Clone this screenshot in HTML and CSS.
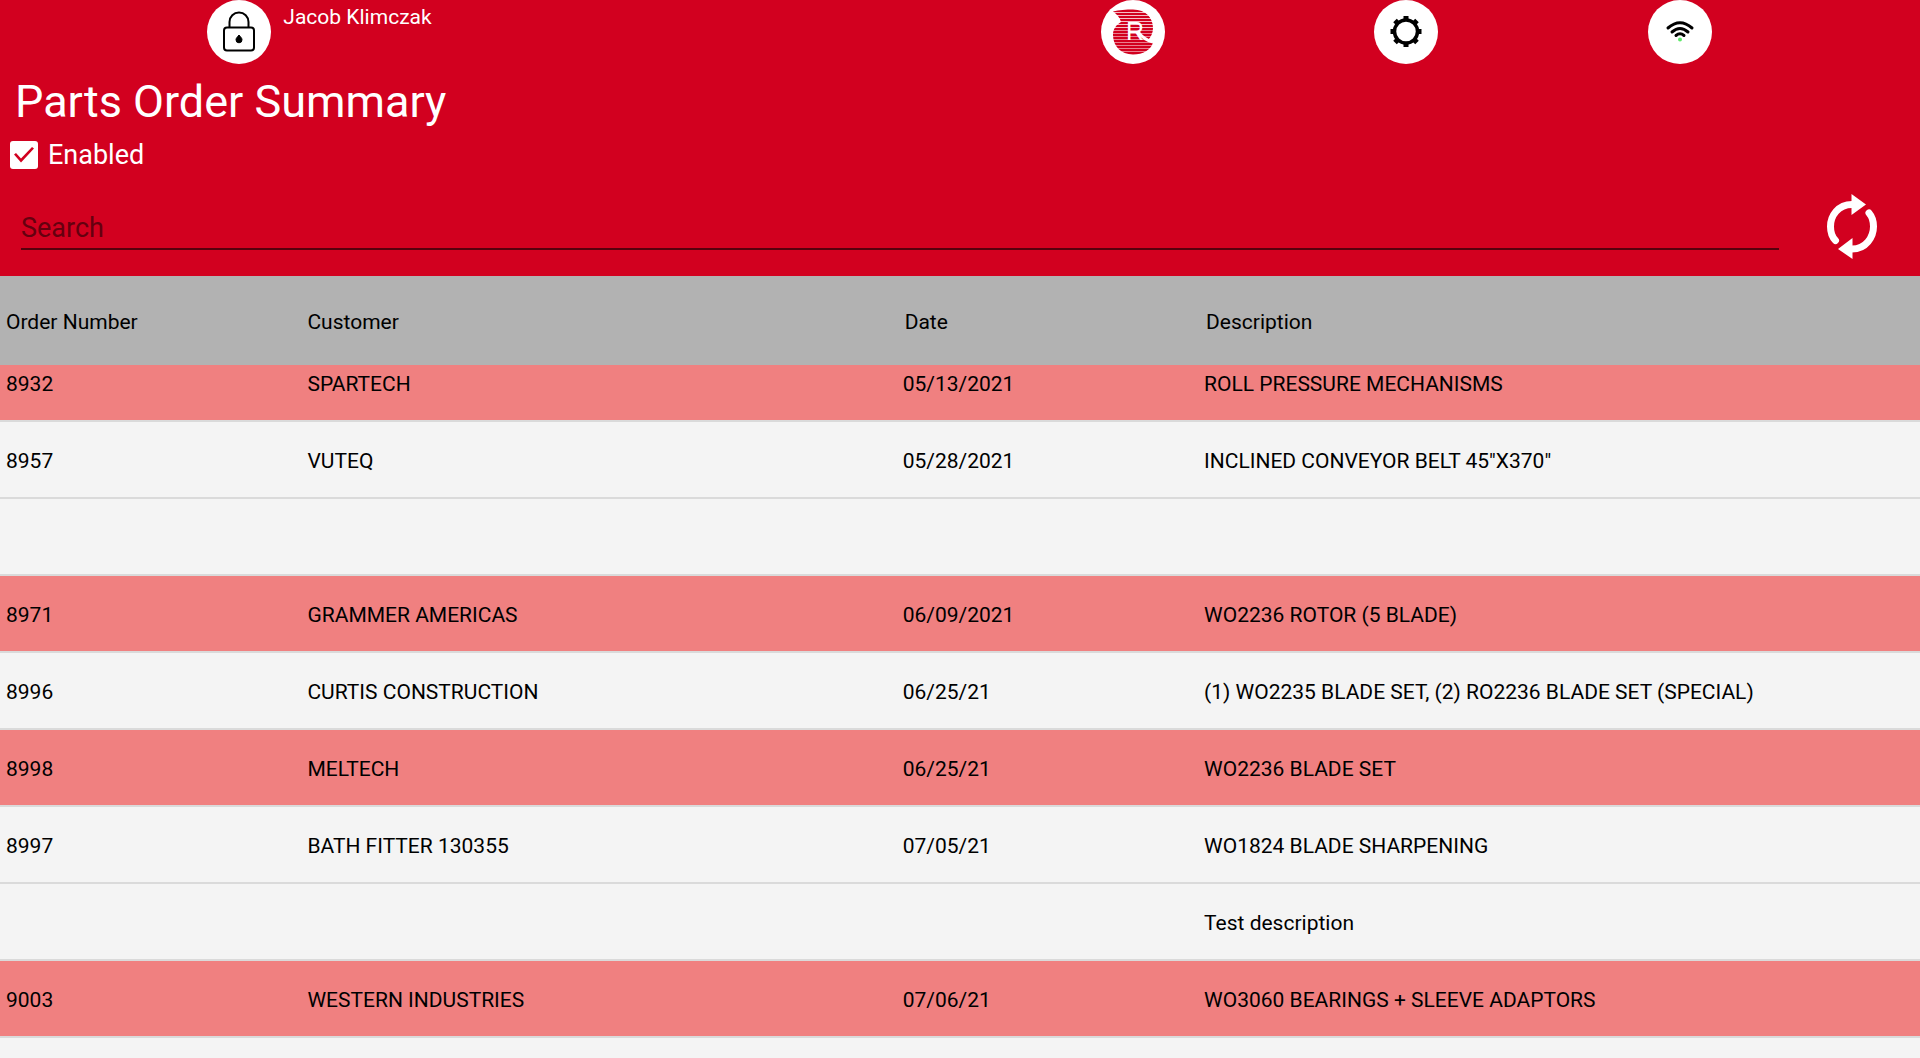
FILE: index.html
```html
<!DOCTYPE html>
<html lang="en">
<head>
<meta charset="utf-8">
<title>Parts Order Summary</title>
<link rel="stylesheet" href="styles.css">
</head>
<body>
<header class="header">
  <div class="topbar">
    <div class="user">
      <button class="round" type="button" aria-label="Lock">
        <svg viewBox="0 0 64 64" fill="none" stroke="#000" stroke-width="2">
          <rect x="17" y="27.500" width="30" height="23" rx="3"/>
          <path d="M22.500 27.500V22a9.500 9.500 0 0 1 19 0V27.500"/>
          <path d="M32 35c1.500 2 3 3 3 4.800a3 3 0 0 1-6 0c0-1.800 1.500-2.800 3-4.800z" fill="#000" stroke-width="1"/>
        </svg>
      </button>
      <span class="user-name">Jacob Klimczak</span>
    </div>
    <nav class="actions">
      <button class="round" type="button" aria-label="Home">
        <svg viewBox="0 0 64 64">
          <path d="M12 11.500C18 10 25 9.500 32 9.500C45 9.500 52 18 52 28C52 33 50 37 47 40L52 42.500C50 50 42 54.500 32 54.500C20 54.500 12 46 12 35C12 29 15 25 20 22C19 18 16 14 12 11.500Z" fill="#d2001f"/>
          <path d="M10 12.500H54M10 15.500H54M10 18.500H54M10 21.500H54M10 24.500H54M10 27.500H54" stroke="#fff" stroke-opacity=".75"/>
          <path d="M10 30.500H54M10 33.500H54M10 36.500H54M10 39.500H54M10 42.500H54M10 45.500H54M10 48.500H54M10 51.500H54" stroke="#fff" stroke-opacity=".5"/>
          <path d="M37 32C41 37 45 40.500 52 42" stroke="#fff" stroke-width="3" fill="none"/>
          <text x="25" y="40" class="logo-letter">R</text>
        </svg>
      </button>
      <button class="round" type="button" aria-label="Settings">
        <svg viewBox="0 0 64 64" stroke="#000" fill="none">
          <circle cx="32" cy="31.500" r="11.500" stroke-width="3.500"/>
          <path stroke-width="5" d="M32 16V20.500M32 42.500V47M16.500 31.500H21M43 31.500H47.500M21 20.500L24 23.500M40 39.500L43 42.500M43 20.500L40 23.500M24 39.500L21 42.500"/>
        </svg>
      </button>
      <button class="round" type="button" aria-label="Connection">
        <svg viewBox="0 0 64 64" fill="none" stroke="#000" stroke-width="3" stroke-linecap="round">
          <path d="M20 28Q32 17.500 44 28M24 32Q32 25 40 32M28 35.500Q32 32 36 35.500"/>
          <circle cx="32" cy="39.500" r="2" fill="#5de86a" stroke="none"/>
        </svg>
      </button>
    </nav>
  </div>
  <h1 class="title">Parts Order Summary</h1>
  <label class="enabled"><input class="check" type="checkbox" checked>Enabled</label>
  <div class="search-row">
    <input class="search" type="text" placeholder="Search" aria-label="Search">
    <button class="refresh" type="button" aria-label="Refresh">
      <svg viewBox="0 0 52 68" fill="none" stroke="#fff" stroke-width="7" stroke-linecap="round">
        <path d="M26 11.500C12 11.500 4.500 23 4.500 33.500C4.500 40 6 44 9.500 47.500"/>
        <path d="M26 56C40 56 47.500 44 47.500 33.500C47.500 28 46 23.500 43 20"/>
        <path d="M25.500 1L40 11.500L25.500 22ZM26.500 45L12 56L26.500 66Z" fill="#fff" stroke="none"/>
      </svg>
    </button>
  </div>
</header>
<main class="list">
  <table class="orders">
    <thead>
      <tr><th class="col-number">Order Number</th><th class="col-customer">Customer</th><th class="col-date">Date</th><th class="col-description">Description</th></tr>
    </thead>
    <tbody>
      <tr class="late"><td>8932</td><td>SPARTECH</td><td>05/13/2021</td><td>ROLL PRESSURE MECHANISMS</td></tr>
      <tr><td>8957</td><td>VUTEQ</td><td>05/28/2021</td><td>INCLINED CONVEYOR BELT 45"X370"</td></tr>
      <tr><td></td><td></td><td></td><td></td></tr>
      <tr class="late"><td>8971</td><td>GRAMMER AMERICAS</td><td>06/09/2021</td><td>WO2236 ROTOR (5 BLADE)</td></tr>
      <tr><td>8996</td><td>CURTIS CONSTRUCTION</td><td>06/25/21</td><td>(1) WO2235 BLADE SET, (2) RO2236 BLADE SET (SPECIAL)</td></tr>
      <tr class="late"><td>8998</td><td>MELTECH</td><td>06/25/21</td><td>WO2236 BLADE SET</td></tr>
      <tr><td>8997</td><td>BATH FITTER 130355</td><td>07/05/21</td><td>WO1824 BLADE SHARPENING</td></tr>
      <tr><td></td><td></td><td></td><td>Test description</td></tr>
      <tr class="late"><td>9003</td><td>WESTERN INDUSTRIES</td><td>07/06/21</td><td>WO3060 BEARINGS + SLEEVE ADAPTORS</td></tr>
      <tr><td></td><td></td><td></td><td></td></tr>
    </tbody>
  </table>
</main>
<script src="script.js"></script>
</body>
</html>
```
FILE: styles.css
```css
* { box-sizing: border-box; }
body {
  margin: 0;
  height: 100vh;
  display: flex;
  flex-direction: column;
  background: #f4f4f4;
  color: #000;
  font-family: Roboto, sans-serif;
  font-size: 21px;
  line-height: 24px;
}
button { border: 0; padding: 0; cursor: pointer; }
svg { display: block; width: 100%; height: 100%; }

.header { flex: none; background: #d2001f; color: #fff; }
.topbar { display: flex; justify-content: space-between; padding: 0 5.4% 0 10.8%; }
.user { display: flex; gap: 12px; }
.user-name { padding-top: 5px; }
.actions { display: flex; width: 51%; }
.actions .round { margin: 0 auto; }
.round { width: 64px; height: 64px; border-radius: 50%; background: #fff; }
.logo-letter { font: 25px "Liberation Sans", sans-serif; fill: #fff; }

.title { margin: 10px 0 0 15px; font-size: 45px; line-height: 56px; font-weight: 400; }
.enabled { display: flex; align-items: center; gap: 10px; width: max-content; height: 48px; padding: 1px 0 0 10px; font-size: 27px; line-height: 32px; }
.check {
  appearance: none;
  width: 28px;
  height: 28px;
  margin: 0;
  border-radius: 3px;
  background: #fff;
  display: grid;
  place-items: center;
}
.check:checked::before {
  content: "";
  width: 20px;
  height: 16px;
  background: #d2001f;
  clip-path: polygon(0 50%, 10% 40%, 35% 75%, 90% 3%, 100% 13%, 35% 100%);
}
.search-row { display: flex; align-items: center; height: 98px; padding: 0 42px 0 21px; gap: 47px; }
.search {
  flex: 1;
  min-width: 0;
  height: 46px;
  padding: 4px 0 0;
  border: 0;
  border-bottom: 2px solid #57000d;
  border-radius: 0;
  background: transparent;
  color: #fff;
  font: inherit;
  font-size: 27px;
  outline: 0;
}
.search::placeholder { color: #65000f; opacity: 1; }
.refresh { width: 52px; height: 68px; background: transparent; }

.list { flex: 1; min-height: 0; overflow: auto; scrollbar-width: none; }
.orders { width: 100%; border-spacing: 0; table-layout: fixed; }
.col-number, .col-date { width: 15.7%; }
.col-customer { width: 31%; }
th { position: sticky; top: 0; height: 89px; padding: 2px 6px 0; background: #b2b2b2; font-weight: 400; text-align: left; }
.col-date, .col-description { padding-left: 8px; }
td { height: 77px; padding: 2px 6px 0; border-bottom: 2px solid #dadada; white-space: nowrap; }
.late td { background: #f08080; }
```
FILE: script.js
```js
// Open the list slightly scrolled, with the header row pinned.
document.querySelector('.list').scrollTop = 20;
```
